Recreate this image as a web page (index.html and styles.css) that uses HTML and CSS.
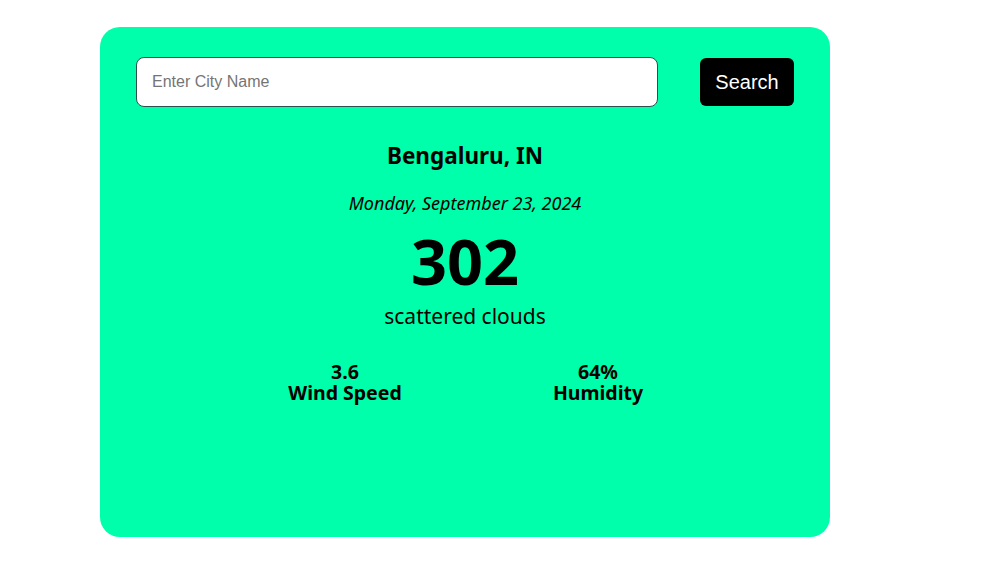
FILE: index.html
```html
<!DOCTYPE html>
<html lang="en">
<head>
<meta charset="utf-8">
<title>Weather</title>
<link rel="stylesheet" href="styles.css">
</head>
<body>
<main class="card">
  <form class="search">
    <input class="search-input" type="text" placeholder="Enter City Name">
    <button class="search-btn" type="button">Search</button>
  </form>
  <section class="weather">
    <h2 class="city">Bengaluru, IN</h2>
    <p class="date">Monday, September 23, 2024</p>
    <div class="temp">302</div>
    <p class="desc">scattered clouds</p>
    <div class="details">
      <div class="detail"><span>3.6</span><span>Wind Speed</span></div>
      <div class="detail"><span>64%</span><span>Humidity</span></div>
    </div>
  </section>
</main>
</body>
</html>
```
FILE: styles.css
```css
* { box-sizing: border-box; }
html, body { margin: 0; padding: 0; background: #fff; }
body {
  font-family: "Noto Sans", "Open Sans", sans-serif;
  padding: 27px 0 0 100px;
}
.card {
  width: 730px;
  height: 510px;
  background: #00ffaa;
  border-radius: 20px;
  padding: 30px 36px;
}
.search {
  display: flex;
  align-items: center;
  gap: 42px;
  margin: 0;
}
.search-input {
  flex: 1;
  height: 50px;
  border: 1px solid #2f4f4f;
  border-radius: 8px;
  padding: 0 15px;
  font-family: "Liberation Sans", Arial, sans-serif;
  font-size: 16px;
  background: #fff;
  outline: none;
}
.search-input::placeholder { color: #757575; }
.search-btn {
  width: 94px;
  height: 48px;
  background: #000;
  color: #fff;
  border: none;
  border-radius: 6px;
  font-family: "Liberation Sans", Arial, sans-serif;
  font-size: 20px;
  padding: 0;
}
.weather {
  text-align: center;
  color: #000;
}
.city {
  margin: 34px 0 0;
  font-size: 22.5px;
  line-height: 30px;
  font-weight: 700;
}
.date {
  margin: 20px 0 0;
  font-size: 18px;
  line-height: 24px;
  font-style: italic;
}
.temp {
  margin: 10px 0 0;
  font-size: 63px;
  line-height: 72px;
  font-weight: 700;
}
.desc {
  margin: 4px 0 0;
  font-size: 21px;
  line-height: 30px;
}
.details {
  display: grid;
  grid-template-columns: 200px 200px;
  column-gap: 53px;
  justify-content: center;
  margin: 30px 0 0 13px;
}
.detail {
  display: flex;
  flex-direction: column;
  align-items: center;
  font-size: 19.5px;
  line-height: 21px;
  font-weight: 700;
}
```
